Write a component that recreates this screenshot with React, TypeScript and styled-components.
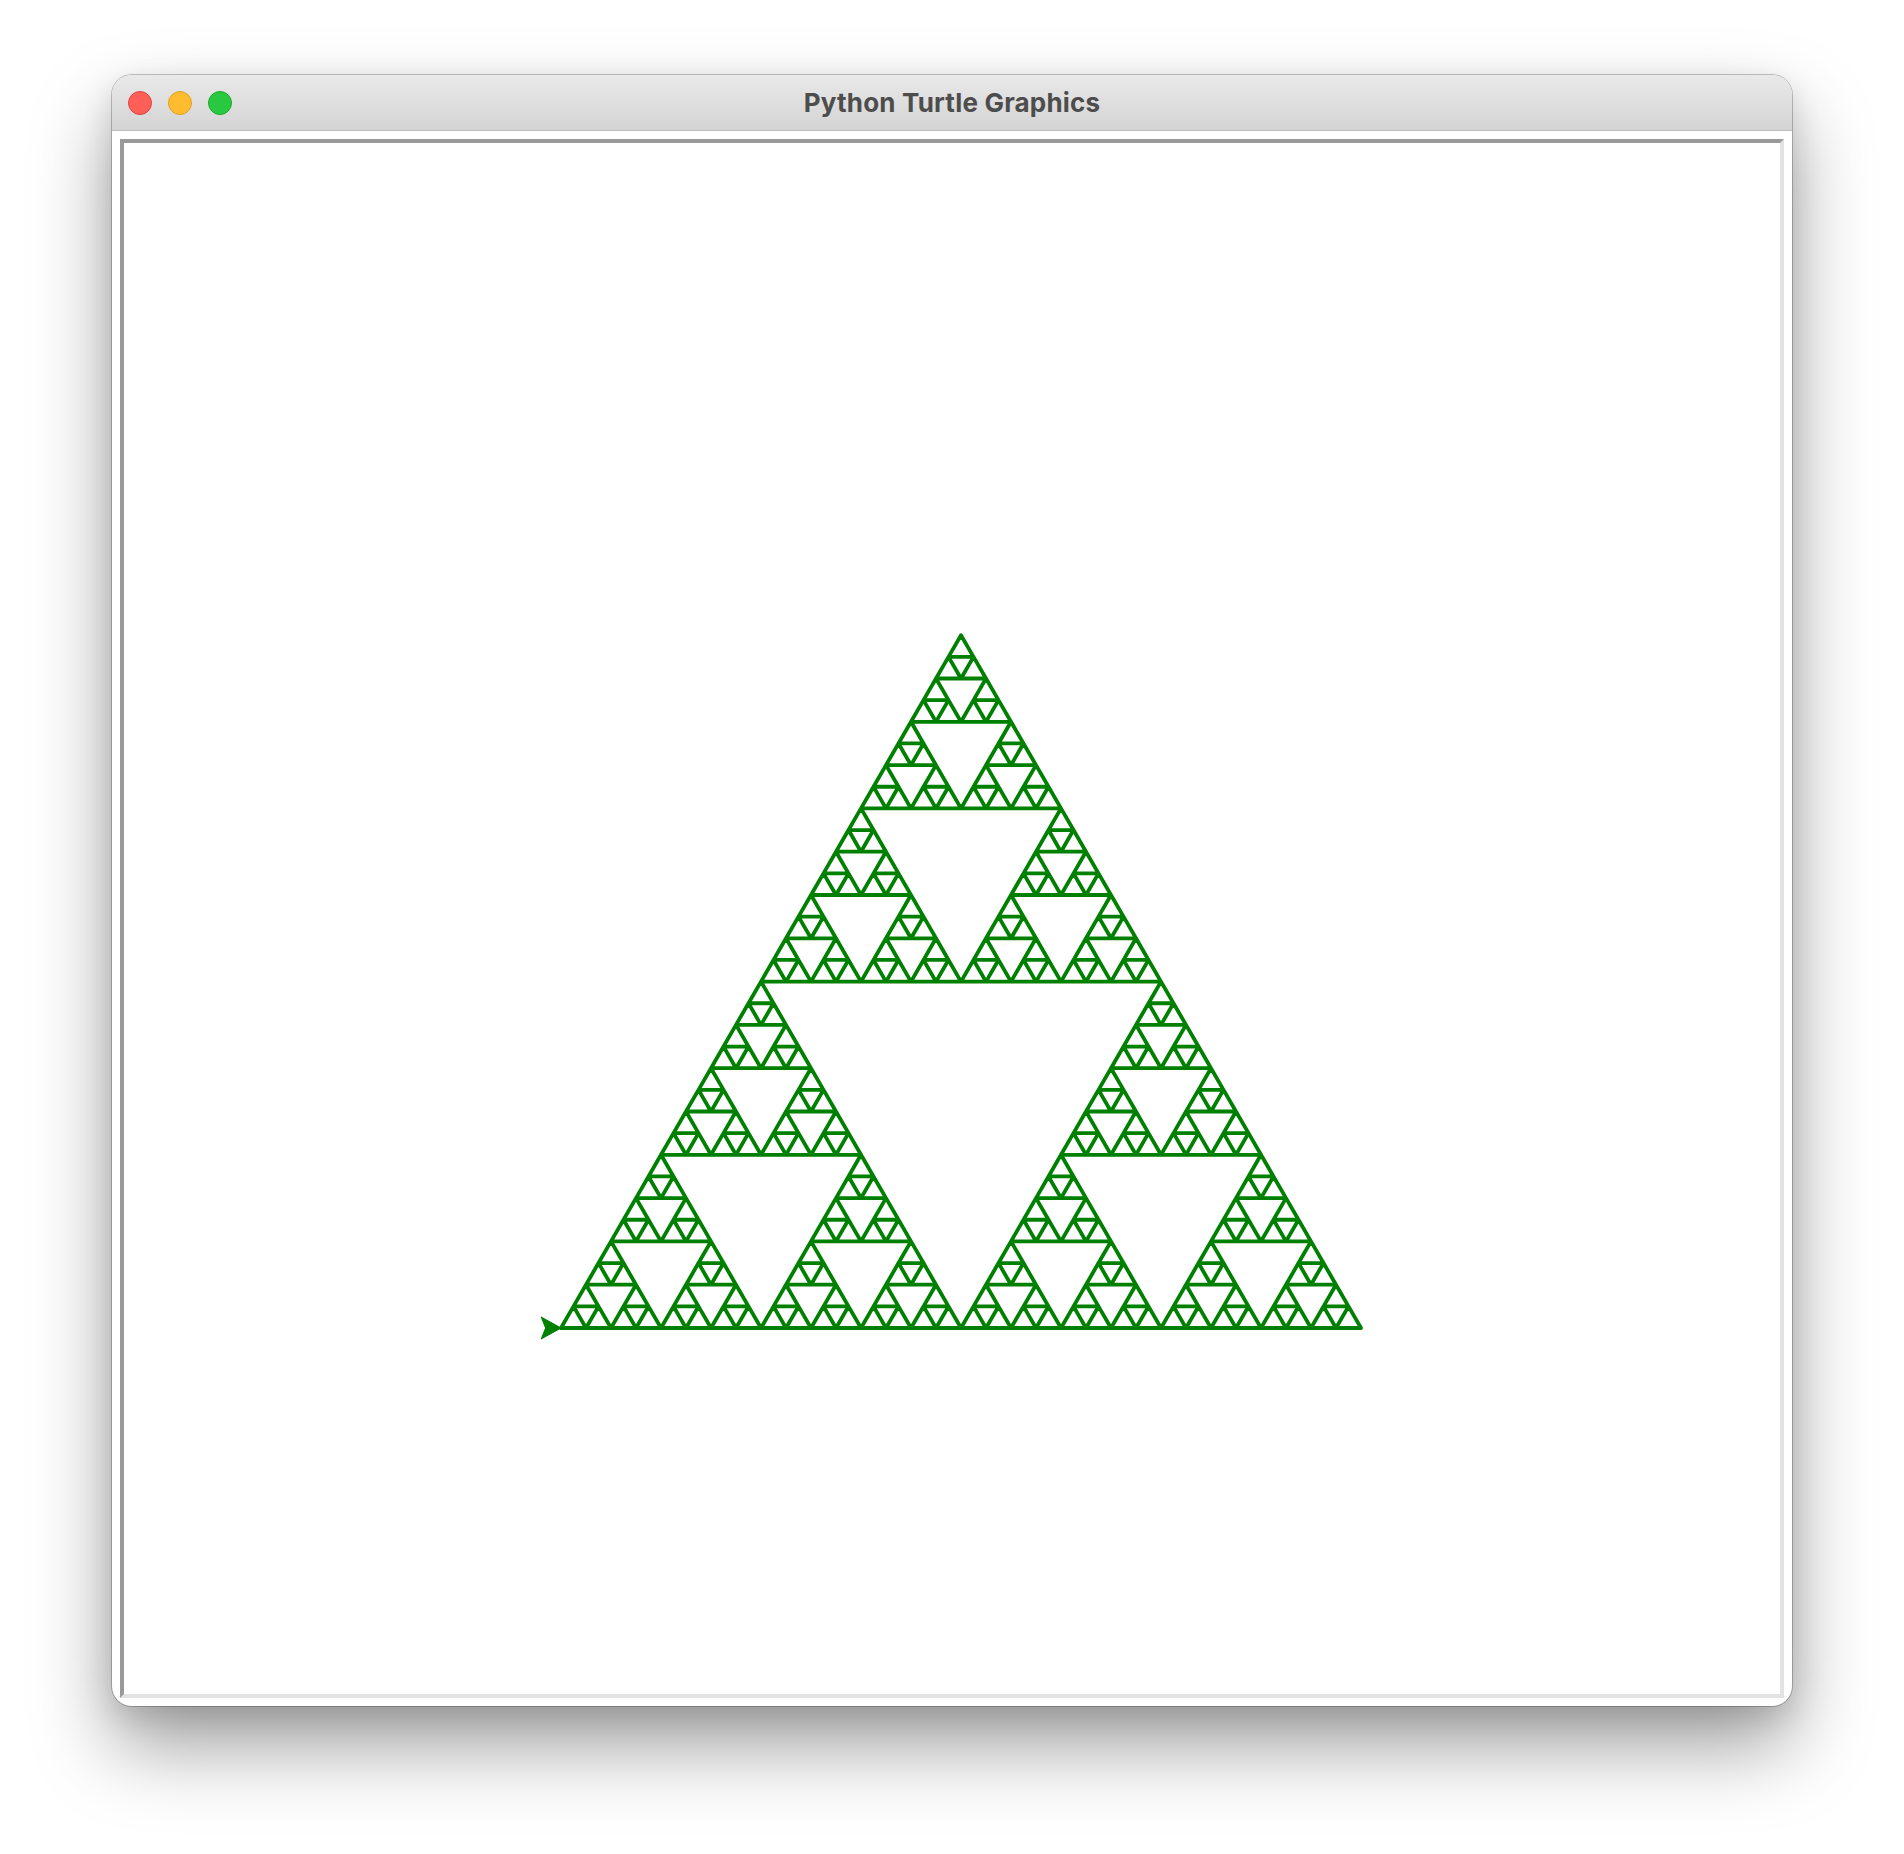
import styled, { createGlobalStyle } from "styled-components";

const GlobalStyle = createGlobalStyle`
  html, body {
    margin: 0;
    padding: 0;
    background: #ffffff;
  }
`;

const Page = styled.div`
  width: 1904px;
  height: 1854px;
  padding: 75px 0 0 112px;
  box-sizing: border-box;
  overflow: hidden;
`;

const Window = styled.div`
  width: 1680px;
  height: 1631px;
  display: flex;
  flex-direction: column;
  border-radius: 20px;
  overflow: hidden;
  background: #ffffff;
  box-shadow:
    0 0 0 1px rgba(0, 0, 0, 0.22),
    0 40px 80px rgba(0, 0, 0, 0.38),
    0 10px 30px rgba(0, 0, 0, 0.12);
`;

const TitleBar = styled.div`
  position: relative;
  height: 55px;
  flex: 0 0 auto;
  display: flex;
  align-items: center;
  justify-content: center;
  background: linear-gradient(#e9e9e9, #d4d4d4);
  border-bottom: 1px solid #bcbcbc;
`;

const Lights = styled.div`
  position: absolute;
  left: 16px;
  top: 16px;
  display: flex;
  gap: 16px;
`;

const Light = styled.span<{ $fill: string; $edge: string }>`
  width: 24px;
  height: 24px;
  border-radius: 50%;
  box-sizing: border-box;
  background: ${(p) => p.$fill};
  border: 1px solid ${(p) => p.$edge};
`;

const Title = styled.div`
  font-family: Inter, "Noto Sans", sans-serif;
  font-weight: 700;
  font-size: 26px;
  color: #4d4d4d;
  letter-spacing: 0.2px;
`;

const Content = styled.div`
  flex: 1 1 auto;
  display: flex;
  padding: 8px;
`;

const Frame = styled.div`
  flex: 1 1 auto;
  position: relative;
  border-style: solid;
  border-width: 4px;
  border-color: #9a9a9a #e3e3e3 #e3e3e3 #9a9a9a;
  background: #ffffff;
`;

const Drawing = styled.svg`
  display: block;
  width: 100%;
  height: 100%;
`;

type Pt = [number, number];

// smallest triangles of a sierpinski gasket, depth levels down
function gasket(a: Pt, b: Pt, c: Pt, depth: number, out: Pt[][]) {
  if (depth === 0) {
    out.push([a, b, c]);
    return;
  }
  const mid = (p: Pt, q: Pt): Pt => [(p[0] + q[0]) / 2, (p[1] + q[1]) / 2];
  const ab = mid(a, b);
  const bc = mid(b, c);
  const ca = mid(c, a);
  gasket(a, ab, ca, depth - 1, out);
  gasket(ab, b, bc, depth - 1, out);
  gasket(ca, bc, c, depth - 1, out);
}

const side = 800;
const left: Pt = [437, 1185];
const right: Pt = [left[0] + side, left[1]];
const apex: Pt = [left[0] + side / 2, left[1] - (side * Math.sqrt(3)) / 2];

const tris: Pt[][] = [];
gasket(left, right, apex, 5, tris);
const pathData = tris
  .map((t) => `M${t[0][0]} ${t[0][1]}L${t[1][0]} ${t[1][1]}L${t[2][0]} ${t[2][1]}Z`)
  .join("");

const s = 2.2;
const tx = left[0];
const ty = left[1];
const arrow = [
  [0, 0],
  [-9, -5],
  [-7, 0],
  [-9, 5],
]
  .map(([x, y]) => `${tx + x * s},${ty + y * s}`)
  .join(" ");

export default function App() {
  return (
    <>
      <GlobalStyle />
      <Page>
        <Window>
          <TitleBar>
            <Lights>
              <Light $fill="#ff5f57" $edge="#e0443e" />
              <Light $fill="#febc2e" $edge="#dea123" />
              <Light $fill="#28c840" $edge="#1aab29" />
            </Lights>
            <Title>Python Turtle Graphics</Title>
          </TitleBar>
          <Content>
            <Frame>
              <Drawing>
                <path
                  d={pathData}
                  fill="none"
                  stroke="#008000"
                  strokeWidth={3.8}
                  strokeLinejoin="round"
                  strokeLinecap="round"
                />
                <polygon points={arrow} fill="#008000" stroke="#008000" strokeWidth={1} />
              </Drawing>
            </Frame>
          </Content>
        </Window>
      </Page>
    </>
  );
}
